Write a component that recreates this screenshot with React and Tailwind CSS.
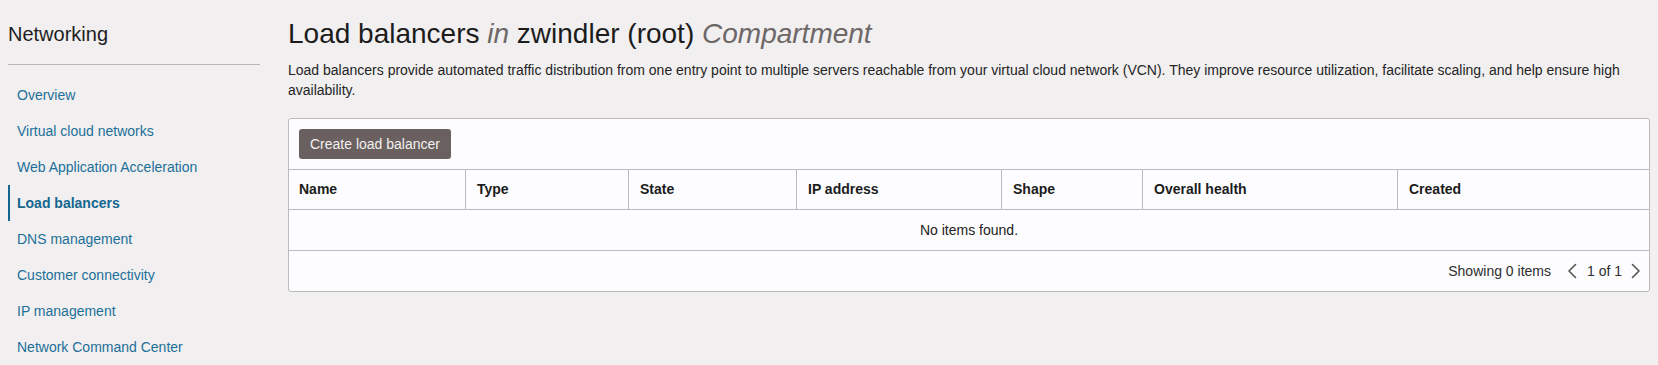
import React from "react";

const navItems = [
  "Overview",
  "Virtual cloud networks",
  "Web Application Acceleration",
  "Load balancers",
  "DNS management",
  "Customer connectivity",
  "IP management",
  "Network Command Center",
];

const columns = ["Name", "Type", "State", "IP address", "Shape", "Overall health", "Created"];

function Chevron({ dir }) {
  return (
    <svg width="11" height="16" viewBox="0 0 11 16" fill="none" className="block">
      {dir === "left" ? (
        <path d="M8.5 1.5 L2 8 L8.5 14.5" stroke="#555" strokeWidth="1.6" strokeLinecap="round" strokeLinejoin="round" />
      ) : (
        <path d="M2.5 1.5 L9 8 L2.5 14.5" stroke="#555" strokeWidth="1.6" strokeLinecap="round" strokeLinejoin="round" />
      )}
    </svg>
  );
}

export default function App() {
  return (
    <div
      className="flex w-[1658px] h-[365px] overflow-hidden bg-[#f1eff0] text-[#222]"
      style={{ fontFamily: '"Liberation Sans", Arial, sans-serif' }}
    >
      {/* Sidebar */}
      <aside className="w-[260px] shrink-0 pl-2 pt-5">
        <div className="text-[20px] leading-7 text-[#1e1e1e]">Networking</div>
        <div className="mt-4 h-px bg-[#b8b6b7]" />
        <nav className="mt-[12px] flex flex-col">
          {navItems.map((item) => {
            const active = item === "Load balancers";
            return (
              <div
                key={item}
                className={
                  active
                    ? "h-9 flex items-center border-l-2 border-[#13668f] pl-[7px] text-[14px] font-bold text-[#13668f]"
                    : "h-9 flex items-center border-l-2 border-transparent pl-[7px] text-[14px] text-[#1d6f99]"
                }
              >
                {item}
              </div>
            );
          })}
        </nav>
      </aside>

      {/* Main */}
      <main className="ml-[28px] flex-1 pr-2 pt-4">
        <h1 className="text-[28px] leading-9 font-normal text-[#1c1c1c]">
          Load balancers <span className="italic text-[#6e6767]">in</span> zwindler (root){" "}
          <span className="italic text-[#6e6767]">Compartment</span>
        </h1>
        <p className="mt-2 text-[14px] leading-5 text-[#252525]">
          Load balancers provide automated traffic distribution from one entry point to multiple servers reachable
          from your virtual cloud network (VCN). They improve resource utilization, facilitate scaling, and help
          ensure high availability.
        </p>

        <div className="mt-[18px] rounded-[3px] border border-[#bcbabb] bg-[#fdfcfe]">
          <div className="px-[10px] pt-[10px] pb-[10px]">
            <button className="h-[30px] rounded-[3px] bg-[#6a605f] px-[11px] text-[14px] text-[#f2f0f0]">
              Create load balancer
            </button>
          </div>
          <div className="grid grid-cols-[176px_163px_168px_205px_141px_255px_1fr] border-y border-[#bcbabb]">
            {columns.map((c, i) => (
              <div
                key={c}
                className={
                  i === 0
                    ? "h-[39px] flex items-center pl-[10px] text-[14px] font-bold text-[#1c1c1c]"
                    : "h-[39px] flex items-center border-l border-[#bcbabb] pl-[11px] text-[14px] font-bold text-[#1c1c1c]"
                }
              >
                {c}
              </div>
            ))}
          </div>
          <div className="h-[41px] flex items-center justify-center border-b border-[#bcbabb] text-[14px] text-[#222]">
            No items found.
          </div>
          <div className="h-[40px] flex items-center justify-end pr-[8px] text-[14px] text-[#2e2e2e]">
            <span>Showing 0 items</span>
            <span className="ml-[16px]">
              <Chevron dir="left" />
            </span>
            <span className="ml-[9px]">1 of 1</span>
            <span className="ml-[8px]">
              <Chevron dir="right" />
            </span>
          </div>
        </div>
      </main>
    </div>
  );
}
